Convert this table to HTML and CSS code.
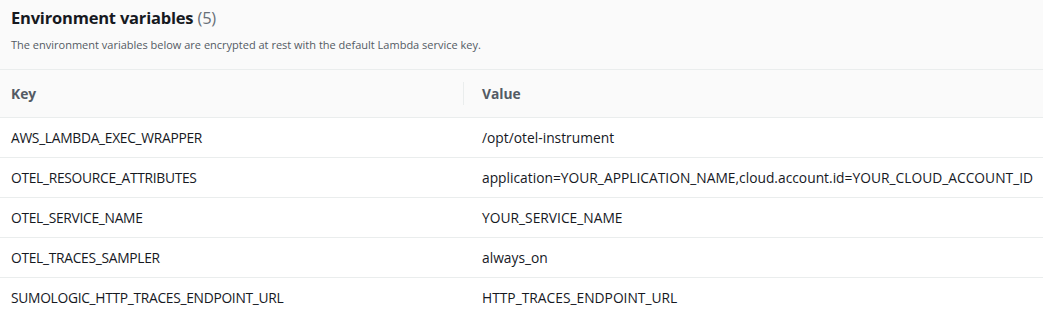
FILE: index.html
```html
<!DOCTYPE html>
<html lang="en">
<head>
    <meta charset="UTF-8">
    <meta name="viewport" content="width=device-width, initial-scale=1.0">
    <title>Environment variables</title>
    <link rel="stylesheet" href="styles.css">
</head>
<body>
    <div class="panel">
        <div class="panel-header">
            <h2>Environment variables <span class="count">(5)</span></h2>
            <p class="description">The environment variables below are encrypted at rest with the default Lambda service key.</p>
        </div>

        <table class="env-table">
            <thead>
                <tr>
                    <th class="col-key">Key</th>
                    <th class="col-value"><span class="divider"></span>Value</th>
                </tr>
            </thead>
            <tbody>
                <tr>
                    <td class="key">AWS_LAMBDA_EXEC_WRAPPER</td>
                    <td class="value">/opt/otel-instrument</td>
                </tr>
                <tr>
                    <td class="key">OTEL_RESOURCE_ATTRIBUTES</td>
                    <td class="value">application=YOUR_APPLICATION_NAME,cloud.account.id=YOUR_CLOUD_ACCOUNT_ID</td>
                </tr>
                <tr>
                    <td class="key">OTEL_SERVICE_NAME</td>
                    <td class="value">YOUR_SERVICE_NAME</td>
                </tr>
                <tr>
                    <td class="key">OTEL_TRACES_SAMPLER</td>
                    <td class="value">always_on</td>
                </tr>
                <tr>
                    <td class="key">SUMOLOGIC_HTTP_TRACES_ENDPOINT_URL</td>
                    <td class="value">HTTP_TRACES_ENDPOINT_URL</td>
                </tr>
            </tbody>
        </table>
    </div>
</body>
</html>
```

FILE: styles.css
```css
:root {
    --text-color: #16191f;
    --muted-color: #545b64;
    --count-color: #687078;
    --header-background: #fafafa;
    --line-color: #eaeded;
}

body {
    margin: 0;
    font-family: 'Open Sans', 'Liberation Sans', sans-serif;
    color: var(--text-color);
    background: #ffffff;
}

.panel-header {
    background: var(--header-background);
    padding: 6px 11px 0;
    height: 63px;
    border-bottom: 1px solid var(--line-color);
}

.panel-header h2 {
    margin: 0;
    font-size: 16.5px;
    line-height: 24px;
    font-weight: 700;
    letter-spacing: -0.2px;
}

.count {
    font-weight: 400;
    color: var(--count-color);
}

.description {
    margin: 7px 0 0;
    font-size: 11px;
    line-height: 16px;
    color: var(--muted-color);
}

.env-table {
    width: 100%;
    table-layout: fixed;
    border-collapse: collapse;
    font-size: 13.8px;
}

.env-table th {
    background: var(--header-background);
    color: var(--muted-color);
    font-weight: 700;
    text-align: left;
    height: 47px;
    padding: 0 11px;
    border-bottom: 1px solid var(--line-color);
}

.col-key {
    width: 463px;
    box-sizing: border-box;
}

.col-value {
    position: relative;
    padding-left: 19px !important;
}

.divider {
    position: absolute;
    left: 0;
    top: 12px;
    bottom: 12px;
    border-left: 1px solid var(--line-color);
}

.env-table td {
    height: 39px;
    padding: 0 11px;
    white-space: nowrap;
    border-bottom: 1px solid var(--line-color);
}

.env-table td.key {
    letter-spacing: -0.3px;
}

.env-table td.value {
    padding-left: 19px;
}
```
